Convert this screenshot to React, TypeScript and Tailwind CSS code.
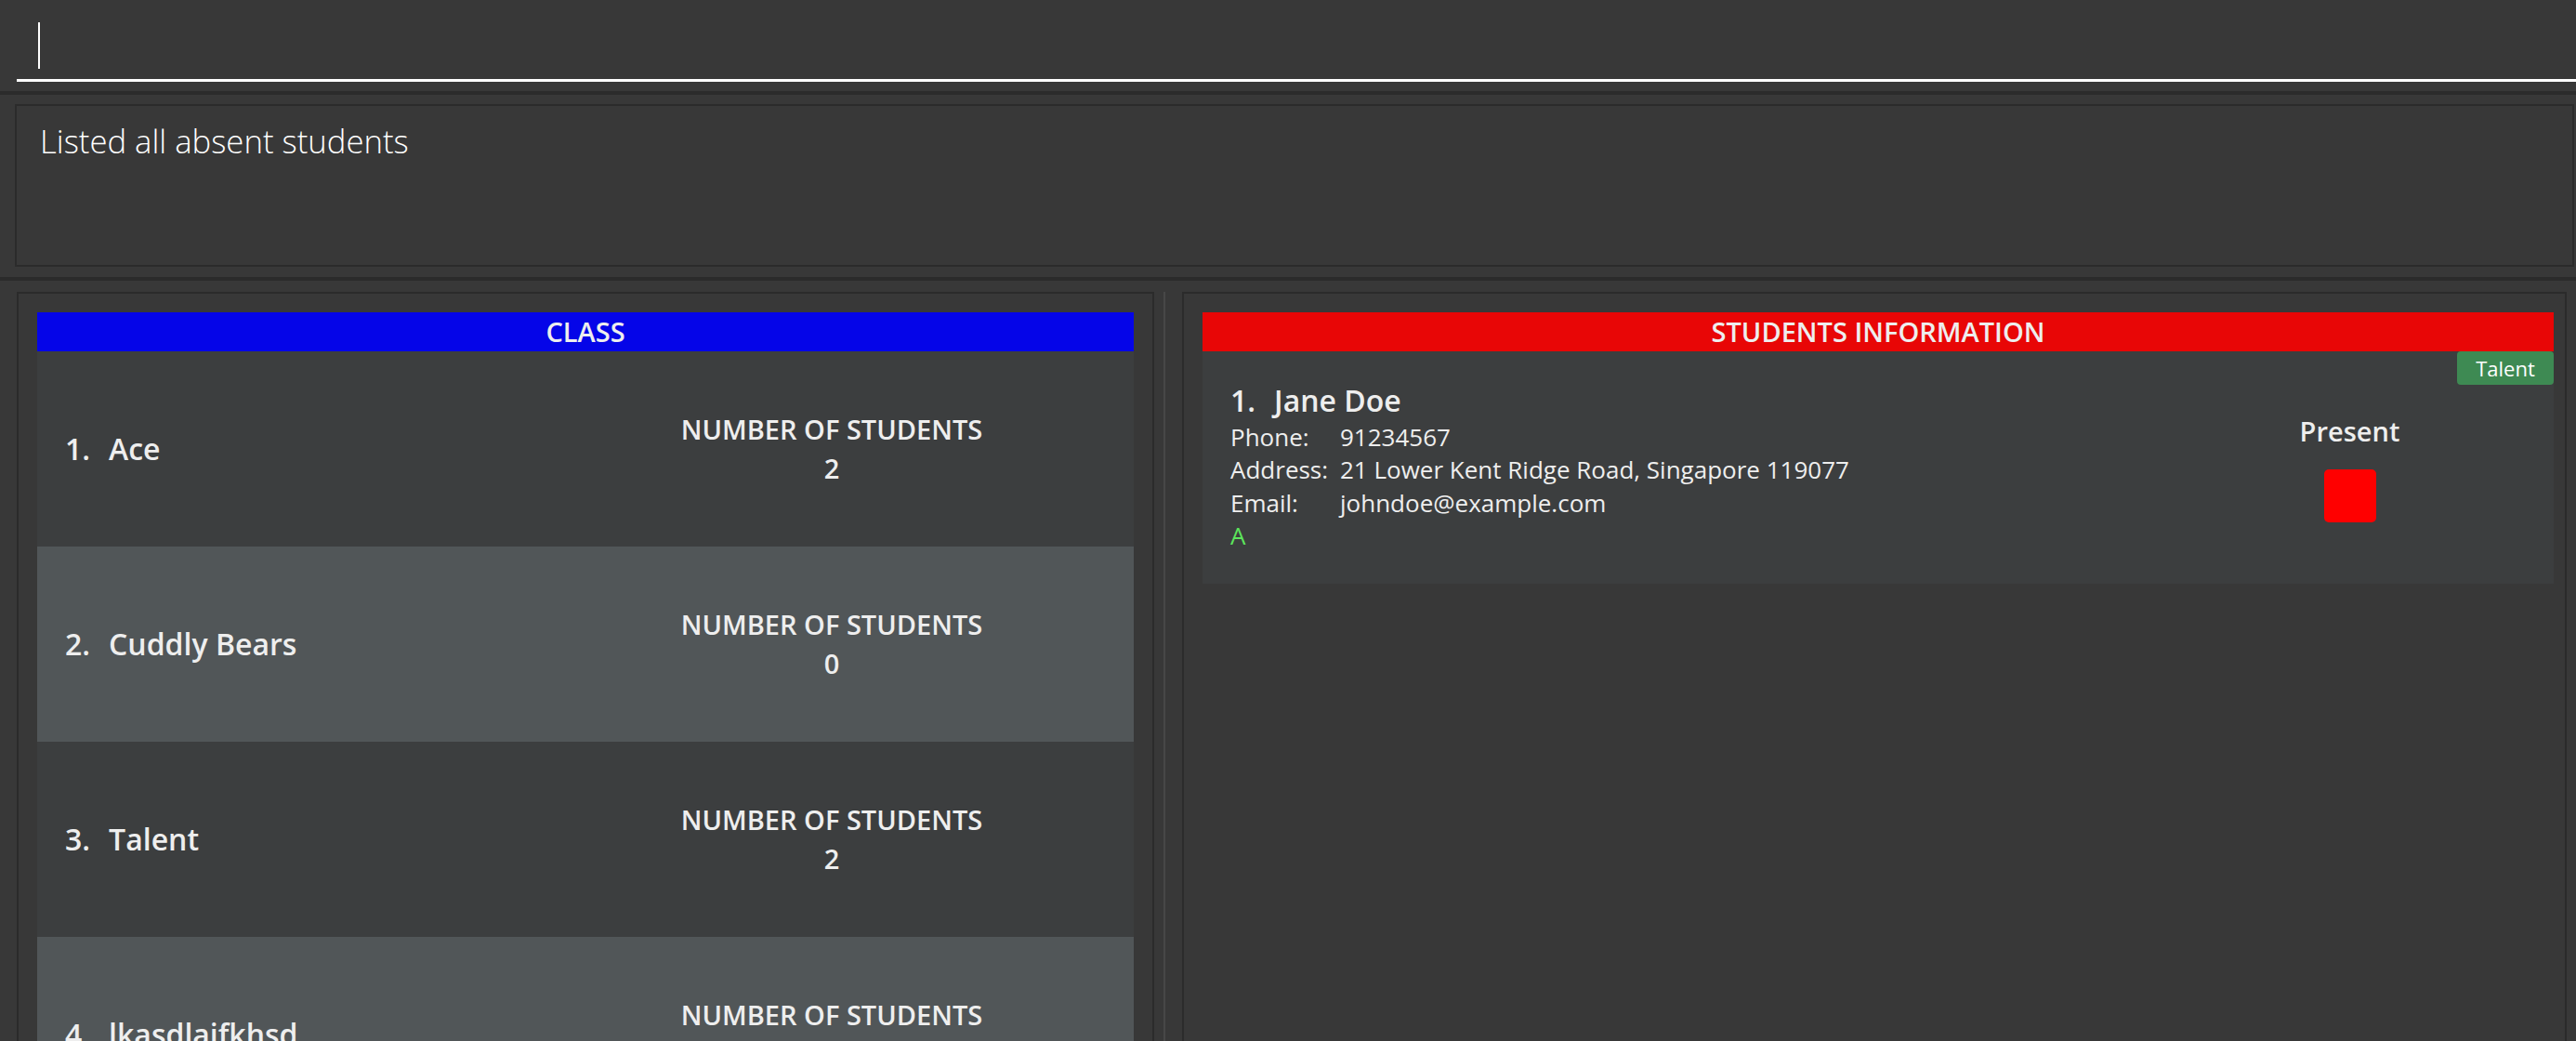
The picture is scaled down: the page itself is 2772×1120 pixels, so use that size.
import React from "react";

const classes = [
  { id: 1, name: "Ace", count: 2 },
  { id: 2, name: "Cuddly Bears", count: 0 },
  { id: 3, name: "Talent", count: 2 },
  { id: 4, name: "lkasdlaifkhsd", count: 1 },
];

function ClassRow({ id, name, count }: { id: number; name: string; count: number }) {
  const odd = id % 2 === 0;
  return (
    <div
      className={`flex h-[210px] shrink-0 items-center pl-[30px] text-[#eeeeee] ${
        odd ? "bg-[#515658]" : "bg-[#3c3e3f]"
      }`}
    >
      <div className="flex w-[500px] items-center gap-[20px] text-[32px] font-semibold leading-[44px]">
        <span>{id}.</span>
        <span>{name}</span>
      </div>
      <div className="flex-1 text-center text-[29px] font-semibold leading-[42px]">
        <p>NUMBER OF STUDENTS</p>
        <p>{count}</p>
      </div>
    </div>
  );
}

function StudentCard() {
  return (
    <div className="relative flex h-[250px] shrink-0 bg-[#3c3e3f] text-[#eeeeee]">
      <div className="flex-1 pl-[30px] pt-[31px]">
        <div className="flex items-center gap-[20px] text-[32px] font-semibold leading-[44px]">
          <span>1.</span>
          <span>Jane Doe</span>
        </div>
        <div className="grid grid-cols-[118px_1fr] text-[26px] leading-[35.4px]">
          <span>Phone:</span>
          <span>91234567</span>
          <span>Address:</span>
          <span>21 Lower Kent Ridge Road, Singapore 119077</span>
          <span>Email:</span>
          <span>johndoe@example.com</span>
        </div>
        <p className="text-[26px] leading-[35.4px] text-[#5ce65c]">A</p>
      </div>
      <div className="flex w-[439px] flex-col items-center justify-center">
        <p className="text-[29px] font-semibold leading-[40px]">Present</p>
        <div className="mt-[21px] h-[57px] w-[56px] rounded-[5px] bg-[#ff0000]" />
      </div>
      <span className="absolute right-0 top-0 flex h-[36px] w-[104px] items-center justify-center rounded-[4px] bg-[#3e8a53] text-[22px] text-white">
        Talent
      </span>
    </div>
  );
}

export default function App() {
  return (
    <div className="flex h-[1120px] w-[2772px] flex-col overflow-hidden bg-[#383838] font-['Open_Sans',sans-serif]">
      {/* command box */}
      <div className="h-[98px] shrink-0 pl-[18px] pt-[24px]">
        <div className="h-[64px] border-b-[3px] border-white pl-[23px]">
          <div className="h-[50px] w-[2px] bg-white" />
        </div>
      </div>
      <div className="h-[4px] shrink-0 bg-[#2b2b2b]" />

      {/* result display */}
      <div className="h-[196px] shrink-0 pl-[16px] pr-[2px] pt-[10px]">
        <div className="h-[175px] border-2 border-[#2b2b2b] pl-[25px] pt-[14px]">
          <p className="text-[34.7px] font-light leading-[47px] text-white">Listed all absent students</p>
        </div>
      </div>
      <div className="h-[4px] shrink-0 bg-[#2b2b2b]" />

      {/* lists */}
      <div className="flex min-h-0 flex-1 pt-[12px]">
        <div className="ml-[18px] flex w-[1224px] flex-col overflow-hidden border-2 border-b-0 border-[#2b2b2b] px-[20px] pt-[20px]">
          <div className="flex h-[42px] shrink-0 items-center justify-center bg-[#0505e8] text-[29px] font-semibold text-[#eeeeee]">
            CLASS
          </div>
          {classes.map((c) => (
            <ClassRow key={c.id} {...c} />
          ))}
        </div>
        <div className="ml-[10px] mr-[18px] w-[2px] bg-[#474747]" />
        <div className="flex w-[1490px] flex-col border-2 border-b-0 border-[#2b2b2b] pl-[20px] pr-[12px] pt-[20px]">
          <div className="flex h-[42px] shrink-0 items-center justify-center bg-[#e80606] text-[29px] font-semibold text-[#eeeeee]">
            STUDENTS INFORMATION
          </div>
          <StudentCard />
        </div>
      </div>
    </div>
  );
}
